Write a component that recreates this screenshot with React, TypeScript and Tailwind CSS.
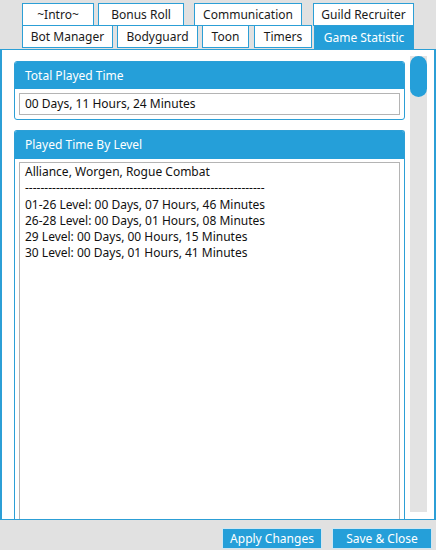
import React from 'react';

const font = { fontFamily: '"Noto Sans", "Open Sans", sans-serif' };

const Tab = ({ label, className, active }: { label: string; className: string; active?: boolean }) => (
  <div
    className={`h-[23px] flex items-center justify-center border border-[#2c9fd6] text-[12px] ${
      active ? 'bg-[#259fd9] text-white border-b-0' : 'bg-white text-[#1a1a1a]'
    } ${className}`}
  >
    {label}
  </div>
);

export default function App() {
  return (
    <div className="w-[436px] h-[550px] bg-[#e1e1e1] flex flex-col overflow-hidden" style={font}>
      <div className="pl-[22px] pt-[3px] flex flex-col">
        <div className="flex">
          <Tab label="~Intro~" className="w-[72px]" />
          <Tab label="Bonus Roll" className="w-[86px] ml-[4px]" />
          <Tab label="Communication" className="w-[108px] ml-[10px]" />
          <Tab label="Guild Recruiter" className="w-[101px] ml-[11px]" />
        </div>
        <div className="flex -mt-px">
          <Tab label="Bot Manager" className="w-[91px]" />
          <Tab label="Bodyguard" className="w-[81px] ml-[4px]" />
          <Tab label="Toon" className="w-[47px] ml-[4px]" />
          <Tab label="Timers" className="w-[58px] ml-[5px]" />
          <Tab label="Game Statistic" active className="w-[100px] ml-[2px] h-[24px]" />
        </div>
      </div>

      <div className="h-[471px] border-2 border-t border-b border-[#2c9fd6] bg-white flex pt-[6px] pl-[12px] pr-[7px]">
        <div className="flex-1 flex flex-col gap-[10px] overflow-hidden pt-[5px]">
          <div className="border border-[#2c9fd6] rounded-[3px] overflow-hidden shrink-0">
            <div className="h-[27px] bg-[#259fd9] text-white text-[12px] flex items-center pl-[10px]">
              Total Played Time
            </div>
            <div className="px-[4px] pt-[4px] pb-[4px]">
              <div className="h-[22px] border border-[#b4b4b4] flex items-center pl-[5px] text-[12px] text-[#111]">
                00 Days, 11 Hours, 24 Minutes
              </div>
            </div>
          </div>

          <div className="border border-[#2c9fd6] border-b-0 rounded-t-[3px] overflow-hidden flex-1 flex flex-col">
            <div className="h-[28px] shrink-0 bg-[#259fd9] text-white text-[12px] flex items-center pl-[10px]">
              Played Time By Level
            </div>
            <div className="flex-1 px-[4px] pt-[3px]">
              <div className="h-full border border-[#b4b4b4] border-b-0 pl-[5px] pt-[1px] text-[12px] leading-[16.3px] text-[#111] whitespace-pre">
                {`Alliance, Worgen, Rogue Combat
--------------------------------------------------------------
01-26 Level: 00 Days, 07 Hours, 46 Minutes
26-28 Level: 00 Days, 01 Hours, 08 Minutes
29 Level: 00 Days, 00 Hours, 15 Minutes
30 Level: 00 Days, 01 Hours, 41 Minutes`}
              </div>
            </div>
          </div>
        </div>

        <div className="w-[17px] ml-[5px] bg-[#e3e3e3] mb-[7px] flex flex-col">
          <div className="h-[41px] bg-[#259fd9] rounded-full"></div>
        </div>
      </div>

      <div className="flex justify-end gap-[10px] pr-[4px] pt-[8px]">
        <button className="w-[100px] h-[21px] bg-[#259fd9] text-white text-[12px] border border-[#cfe6f2]">
          Apply Changes
        </button>
        <button className="w-[100px] h-[21px] bg-[#259fd9] text-white text-[12px] border border-[#cfe6f2]">
          Save &amp; Close
        </button>
      </div>
    </div>
  );
}
